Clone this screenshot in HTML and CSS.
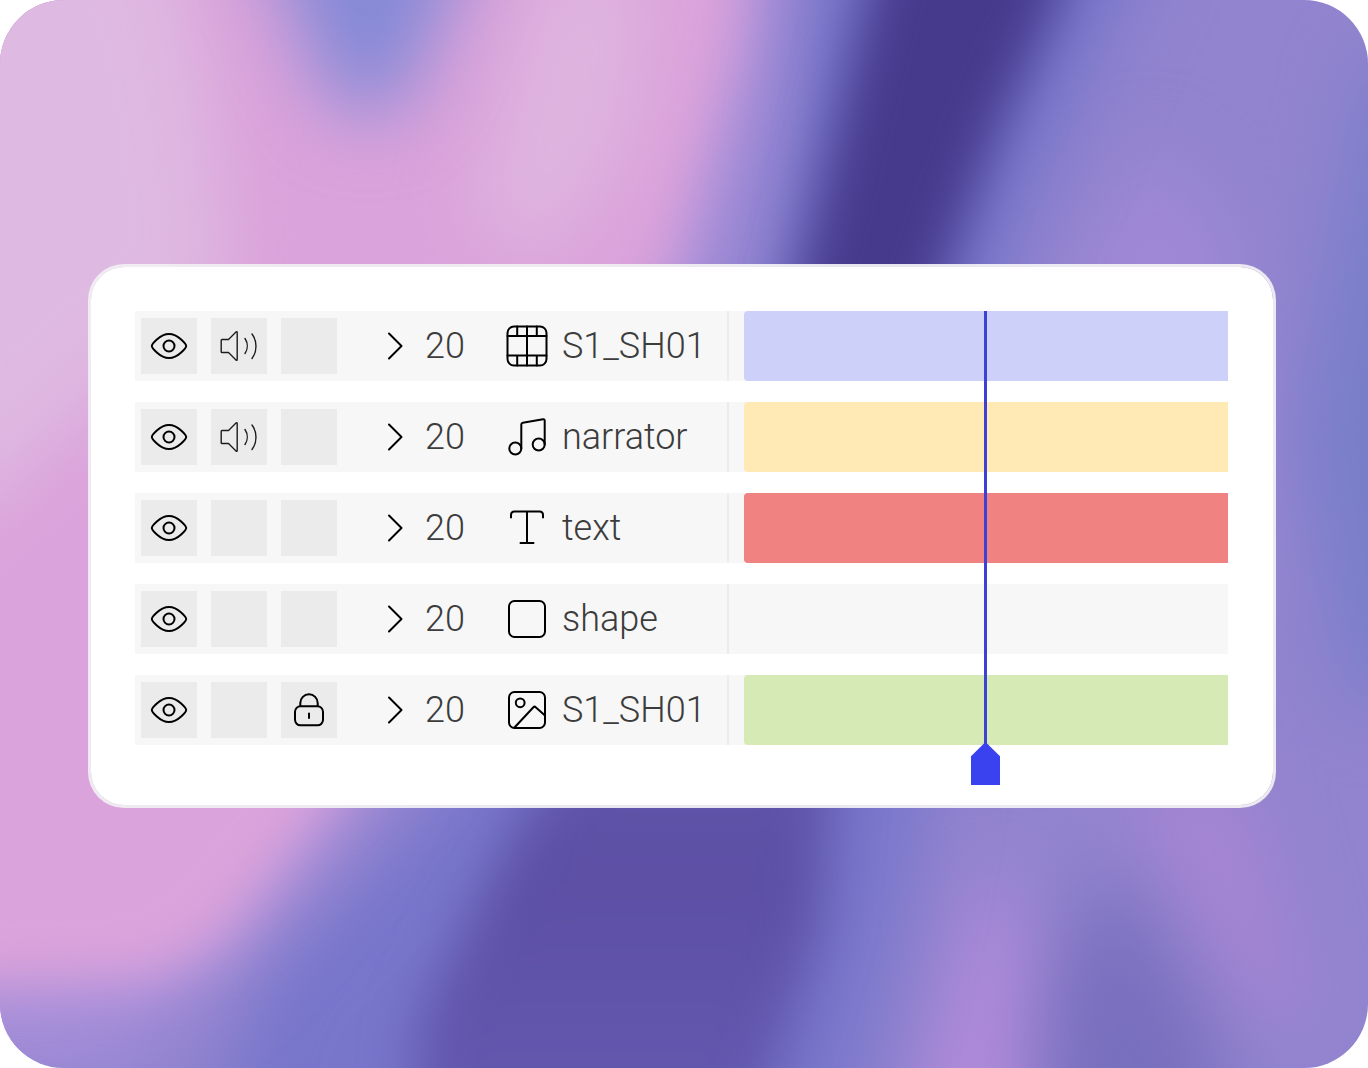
FILE: index.html
```html
<!DOCTYPE html>
<html lang="en">

<head>
    <meta charset="UTF-8">
    <meta name="viewport" content="width=device-width, initial-scale=1.0">
    <title>Timeline</title>
    <link rel="stylesheet" href="styles.css">
</head>

<body>
    <!-- shared icons -->
    <svg class="sprite" aria-hidden="true">
        <symbol id="eye" viewBox="0 0 56 56">
            <path d="M10.800 28C10.800 26.600 18.500 16 28 16S45.200 26.600 45.200 28 37.500 40 28 40 10.800 29.400 10.800 28Z" />
            <circle cx="28" cy="28" r="5.500" />
        </symbol>
        <symbol id="sound" viewBox="0 0 56 56">
            <path d="M11 21.500h6.500L25 14c.6-.6 1.200-.4 1.200.5v27c0 .9-.6 1.100-1.200.5l-7.500-7.500h-6.500c-.5 0-.8-.3-.8-.8V22.300c0-.5.3-.8.8-.8Z" />
            <path d="M34 20.500c3 4.500 3 10.500 0 15M41 16c5.300 7 5.300 17.500 0 24.500" />
        </symbol>
        <symbol id="lock" viewBox="0 0 56 56">
            <rect x="14" y="24.300" width="28" height="19" rx="5.500" />
            <path d="M19.300 24V21a8.700 8.700 0 0 1 17.400 0v3M28 31.500v4.500" />
        </symbol>
        <symbol id="chevron" viewBox="0 0 16 28">
            <path d="M2 1.500 14.500 14 2 26.500" />
        </symbol>
        <symbol id="film" viewBox="0 0 42 42">
            <rect x="1.500" y="1.500" width="39" height="39" rx="6.500" />
            <path d="M1.500 11h39M1.500 30.500h39M21 1.500v39M11.200 1.500V11M30.800 1.500V11M11.200 30.500v10M30.800 30.500v10" />
        </symbol>
        <symbol id="music" viewBox="0 0 42 42">
            <circle cx="9.300" cy="32.500" r="6" />
            <circle cx="32.700" cy="28.500" r="6" />
            <path d="M15.300 32.500V8.500c0-1 .5-1.600 1.500-1.800L37 3.300c1.100-.2 1.700.3 1.700 1.400v23.800" />
        </symbol>
        <symbol id="type" viewBox="0 0 42 42">
            <path d="M5 10.500V8c0-2.300 1.200-3.500 3.500-3.500h25C35.800 4.500 37 5.700 37 8v2.500M21 4.500v31.500M14.500 36h13" />
        </symbol>
        <symbol id="shape" viewBox="0 0 42 42">
            <rect x="3" y="3" width="36" height="36" rx="5.500" />
        </symbol>
        <symbol id="image" viewBox="0 0 42 42">
            <rect x="3" y="3" width="36" height="36" rx="5.500" />
            <circle cx="14.200" cy="13.800" r="4.400" />
            <path d="M8.500 38.500 27.400 18.200c.8-.8 1.500-.8 2.300 0L39 26.500" />
        </symbol>
    </svg>

    <main class="stage">
        <svg class="backdrop" viewBox="0 0 1368 1068" preserveAspectRatio="none" aria-hidden="true">
            <defs>
                <filter id="soft" x="-30%" y="-30%" width="160%" height="160%" color-interpolation-filters="sRGB">
                    <feGaussianBlur stdDeviation="26" />
                </filter>
                <filter id="softer" x="-60%" y="-60%" width="220%" height="220%" color-interpolation-filters="sRGB">
                    <feGaussianBlur stdDeviation="38" />
                </filter>
                <linearGradient id="deep" x1="0" y1="0" x2="0" y2="1">
                    <stop offset="0" stop-color="#463a8c" />
                    <stop offset=".35" stop-color="#463a8c" />
                    <stop offset=".65" stop-color="#6057ac" />
                    <stop offset=".78" stop-color="#5c4fa4" />
                    <stop offset="1" stop-color="#6559b2" />
                </linearGradient>
            </defs>
            <rect width="1368" height="1068" fill="#9284cf" />
            <g filter="url(#softer)">
                <path d="M1370 60h100v640h-120l-50-260Z" fill="#787ec9" />
                <path d="M1150 140 1060 290l90 400 100-100-20-350Z" fill="#a089d5" />
                <path d="M1110 860 1040 1000l10 200h190l-30-180Z" fill="#786fbd" />
                <path d="M1120 780h120l70 250-60-20Z" fill="#a885d3" />
                <path d="M985 850 900 1180h110l20-220Z" fill="#b48cdb" />
            </g>
            <!-- blue edges of the dark fold -->
            <g filter="url(#softer)">
                <path d="M800-80h360l-60 130-90 200-90 560-20 110-60 240H200l60-190 200-200 300-400Z" fill="#7776cb" />
            </g>
            <path d="M700-80h90l-20 200-50 160-360 540-140 160-110 80-200 10v-70l300-160 300-300Z" fill="#a78fda" filter="url(#softer)" />
            <path d="M886-80h200l-32 90-55 120-50 134-80 300-40 246-10 120-70 220H410l10-130 105-210 200-240 80-320Z" fill="url(#deep)" filter="url(#soft)" />
            <!-- pink side -->
            <path d="M-100-100h858l-18 150-62 210-150 290-193 250-110 140-70 40-255 15Z" fill="#dba3db" filter="url(#soft)" />
            <g filter="url(#softer)">
                <path d="M-80-80h250l40 180 20 190L-80 560Z" fill="#deb9e1" />
                <path d="M540-40h110l-20 180-80 120-80-30Z" fill="#deb5df" />
            </g>
            <path d="M250-90h240l-60 130c-30 100-90 110-125 0Z" fill="#8489d6" filter="url(#softer)" />
        </svg>

        <section class="card">
            <div class="timeline">
                <div class="row">
                    <div class="layer">
                        <div class="toggles">
                            <button class="toggle" aria-label="Visible"><svg><use href="#eye" /></svg></button>
                            <button class="toggle thin" aria-label="Sound"><svg><use href="#sound" /></svg></button>
                            <button class="toggle" aria-label="Lock"></button>
                        </div>
                        <button class="expand" aria-label="Expand"><svg><use href="#chevron" /></svg></button>
                        <span class="num">20</span>
                        <svg class="kind"><use href="#film" /></svg>
                        <span class="name">S1_SH01</span>
                    </div>
                    <div class="track"><div class="clip blue"></div></div>
                </div>
                <div class="row">
                    <div class="layer">
                        <div class="toggles">
                            <button class="toggle" aria-label="Visible"><svg><use href="#eye" /></svg></button>
                            <button class="toggle thin" aria-label="Sound"><svg><use href="#sound" /></svg></button>
                            <button class="toggle" aria-label="Lock"></button>
                        </div>
                        <button class="expand" aria-label="Expand"><svg><use href="#chevron" /></svg></button>
                        <span class="num">20</span>
                        <svg class="kind"><use href="#music" /></svg>
                        <span class="name">narrator</span>
                    </div>
                    <div class="track"><div class="clip yellow"></div></div>
                </div>
                <div class="row">
                    <div class="layer">
                        <div class="toggles">
                            <button class="toggle" aria-label="Visible"><svg><use href="#eye" /></svg></button>
                            <button class="toggle" aria-label="Sound"></button>
                            <button class="toggle" aria-label="Lock"></button>
                        </div>
                        <button class="expand" aria-label="Expand"><svg><use href="#chevron" /></svg></button>
                        <span class="num">20</span>
                        <svg class="kind"><use href="#type" /></svg>
                        <span class="name">text</span>
                    </div>
                    <div class="track"><div class="clip red"></div></div>
                </div>
                <div class="row">
                    <div class="layer">
                        <div class="toggles">
                            <button class="toggle" aria-label="Visible"><svg><use href="#eye" /></svg></button>
                            <button class="toggle" aria-label="Sound"></button>
                            <button class="toggle" aria-label="Lock"></button>
                        </div>
                        <button class="expand" aria-label="Expand"><svg><use href="#chevron" /></svg></button>
                        <span class="num">20</span>
                        <svg class="kind"><use href="#shape" /></svg>
                        <span class="name">shape</span>
                    </div>
                    <div class="track"></div>
                </div>
                <div class="row">
                    <div class="layer">
                        <div class="toggles">
                            <button class="toggle" aria-label="Visible"><svg><use href="#eye" /></svg></button>
                            <button class="toggle" aria-label="Sound"></button>
                            <button class="toggle" aria-label="Lock"><svg><use href="#lock" /></svg></button>
                        </div>
                        <button class="expand" aria-label="Expand"><svg><use href="#chevron" /></svg></button>
                        <span class="num">20</span>
                        <svg class="kind"><use href="#image" /></svg>
                        <span class="name">S1_SH01</span>
                    </div>
                    <div class="track"><div class="clip green"></div></div>
                </div>
                <div class="scrub">
                    <button class="playhead" aria-label="Playhead"></button>
                </div>
            </div>
        </section>
    </main>
</body>

</html>
```
FILE: styles.css
```css
* {
    margin: 0;
    padding: 0;
    box-sizing: border-box;
}

body {
    background-color: #fff;
    font-family: Roboto, "Liberation Sans", sans-serif;
    font-weight: 300;
    color: #3c3c3c;
}

button {
    border: none;
    background: none;
    cursor: pointer;
}

svg {
    display: block;
    fill: none;
    stroke: #000;
    stroke-width: 2;
    stroke-linecap: round;
    stroke-linejoin: round;
}

.sprite {
    position: absolute;
    width: 0;
    height: 0;
}

.stage {
    position: relative;
    display: flex;
    align-items: center;
    min-height: 100vh;
    padding: 4px 92px 0 88px;
    border-radius: 64px;
    overflow: hidden;
}

.backdrop {
    position: absolute;
    left: 0;
    top: 0;
    width: 100%;
    height: 100%;
    stroke: none;
}

.card {
    position: relative;
    flex: 1;
    padding: 44px 45px 60px 44px;
    background-color: #fff;
    background-clip: padding-box;
    border: 3px solid rgba(240, 238, 242, 0.95);
    border-radius: 36px;
}

.timeline {
    position: relative;
    display: flex;
    flex-direction: column;
    gap: 21px;
}

.row {
    display: flex;
    height: 70px;
    background-color: #f7f7f7;
}

.layer {
    display: flex;
    align-items: center;
    flex: none;
    width: 594px;
    padding-left: 6px;
    border-right: 2px solid #ececec;
}

.toggles {
    display: flex;
    gap: 14px;
}

.toggle {
    width: 56px;
    height: 56px;
    background-color: #ebebeb;
}

.toggle svg {
    width: 56px;
    height: 56px;
}

.toggle.thin svg {
    stroke: #1c1c1c;
    stroke-width: 1.4;
}

.expand {
    margin-left: 50px;
}

.expand svg {
    width: 16px;
    height: 28px;
}

.num,
.name {
    font-size: 36px;
    line-height: 42px;
}

.num {
    width: 56px;
    margin-left: 22px;
}

.kind {
    width: 42px;
    height: 42px;
    margin-left: 25px;
}

.name {
    margin-left: 14px;
}

.track {
    flex: 1;
    padding-left: 15px;
}

.clip {
    height: 100%;
    border-radius: 4px 0 0 4px;
}

.blue {
    background-color: #cdd1f9;
}

.yellow {
    background-color: #ffeab6;
}

.red {
    background-color: #f08282;
}

.green {
    background-color: #d6eab5;
}

/* covers the clip area, the playhead sits at a percentage of it */
.scrub {
    position: absolute;
    left: 609px;
    right: 0;
    top: 0;
    bottom: 0;
    pointer-events: none;
}

.playhead {
    position: absolute;
    left: 50%;
    top: 0;
    bottom: -40px;
    width: 29px;
    margin-left: -15px;
    pointer-events: auto;
}

.playhead::before {
    content: "";
    position: absolute;
    left: 13px;
    top: 0;
    bottom: 40px;
    width: 3px;
    background-color: #3d42d2;
}

.playhead::after {
    content: "";
    position: absolute;
    left: 0;
    bottom: 0;
    width: 29px;
    height: 43px;
    background-color: #3a41ee;
    clip-path: polygon(50% 0, 100% 33%, 100% 100%, 0 100%, 0 33%);
}
```
